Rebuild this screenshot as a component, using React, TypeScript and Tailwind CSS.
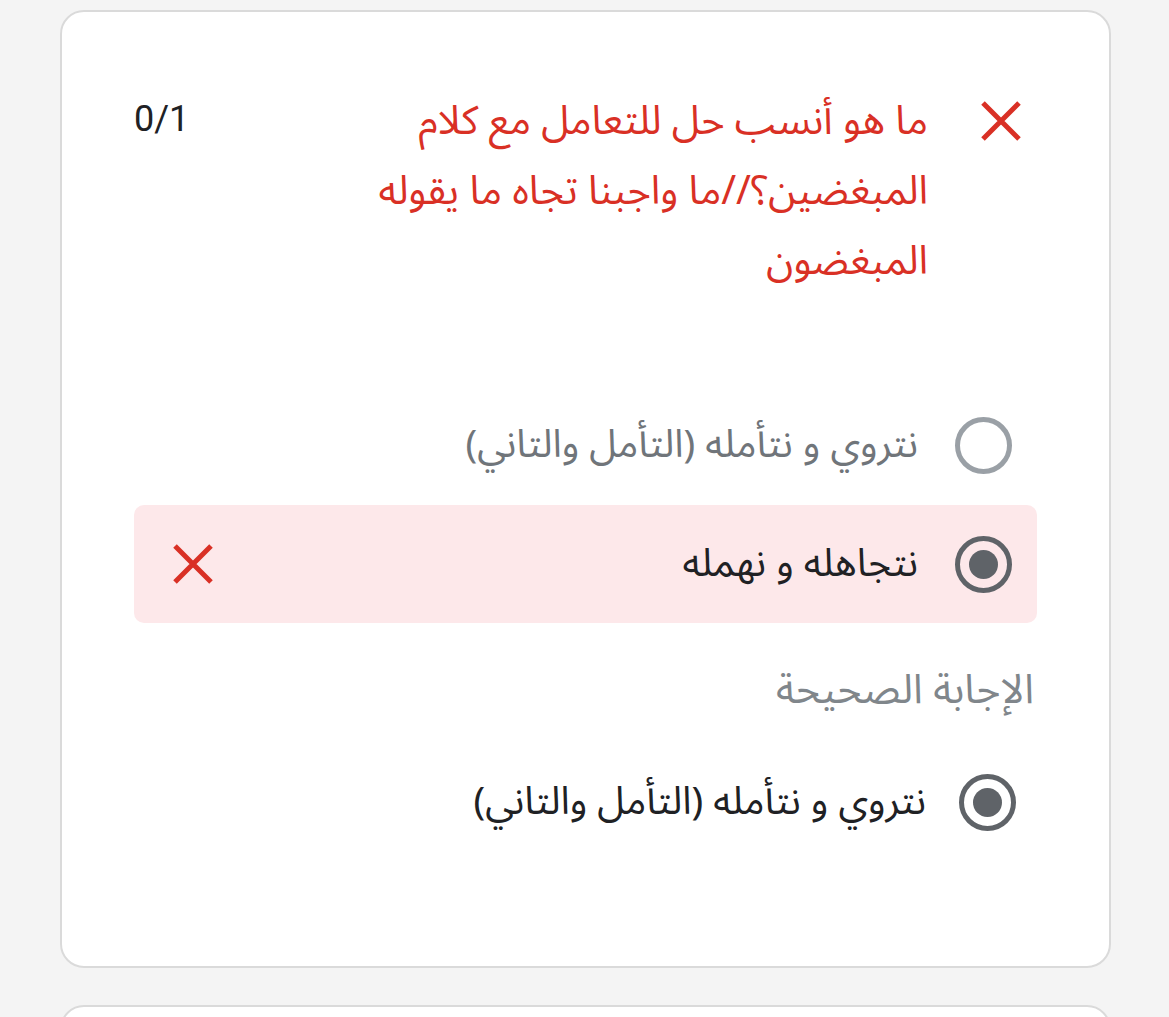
import React from 'react'

const ar = { fontFamily: '"Noto Sans Arabic", "DejaVu Sans", sans-serif' }

function CrossIcon({ className }: { className?: string }) {
  return (
    <svg viewBox="0 0 42 42" className={className} fill="none">
      <path d="M3 3 L39 39 M39 3 L3 39" stroke="#d93025" strokeWidth="5" strokeLinecap="butt" />
    </svg>
  )
}

function Radio({ checked, dim }: { checked?: boolean; dim?: boolean }) {
  return (
    <div
      className={
        'flex h-[57px] w-[57px] shrink-0 items-center justify-center rounded-full border-[5px] ' +
        (dim ? 'border-[#9aa0a6]' : 'border-[#5f6368]')
      }
    >
      {checked && <div className="h-[29px] w-[29px] rounded-full bg-[#5f6368]" />}
    </div>
  )
}

export default function App() {
  return (
    <div className="h-screen overflow-hidden bg-[#f4f4f4] pt-[10px]">
      <div
        dir="rtl"
        className="ml-[60px] w-[1051px] rounded-[24px] border-2 border-[#dadada] bg-white px-[72px] pb-[105px] pt-[75px]"
      >
        {/* header */}
        <div className="flex items-start">
          <div className="mr-[15px] mt-[13px] shrink-0">
            <CrossIcon className="h-[42px] w-[42px]" />
          </div>
          <div
            style={ar}
            className="mr-[52px] flex flex-1 flex-col text-[40px] leading-[70px] text-[#d93025]"
          >
            <span>ما هو أنسب حل للتعامل مع كلام</span>
            <span>المبغضين؟//ما واجبنا تجاه ما يقوله</span>
            <span>المبغضون</span>
          </div>
          <span
            dir="ltr"
            className="mt-[12px] shrink-0 text-[36px] leading-[40px] text-[#202124]"
            style={{ fontFamily: 'Roboto, sans-serif' }}
          >
            0/1
          </span>
        </div>

        {/* options */}
        <div className="mt-[89px] flex flex-col gap-[1px]">
          <div className="flex h-[118px] items-center gap-[37px] pr-[25px]">
            <Radio dim />
            <span style={ar} className="text-[39px] leading-[50px] text-[#70757a]">
              نتروي و نتأمله (التأمل والتاني)
            </span>
          </div>
          <div className="flex h-[118px] items-center rounded-[10px] bg-[#fde8ea] pl-[38px] pr-[25px]">
            <div className="flex flex-1 items-center gap-[37px]">
              <Radio checked />
              <span style={ar} className="text-[39px] leading-[50px] text-[#202124]">
                نتجاهله و نهمله
              </span>
            </div>
            <CrossIcon className="h-[42px] w-[42px]" />
          </div>
        </div>

        {/* correct answer */}
        <div style={ar} className="mr-[3px] mt-[43px] text-[41px] leading-[48px] text-[#80868b]">
          الإجابة الصحيحة
        </div>
        <div className="mr-[-4px] mt-[29px] flex h-[118px] items-center gap-[33px] pr-[25px]">
          <Radio checked />
          <span style={ar} className="text-[39px] leading-[50px] text-[#202124]">
            نتروي و نتأمله (التأمل والتاني)
          </span>
        </div>
      </div>

      <div className="ml-[60px] mt-[37px] h-[120px] w-[1051px] rounded-[24px] border-2 border-[#dadada] bg-white" />
    </div>
  )
}
